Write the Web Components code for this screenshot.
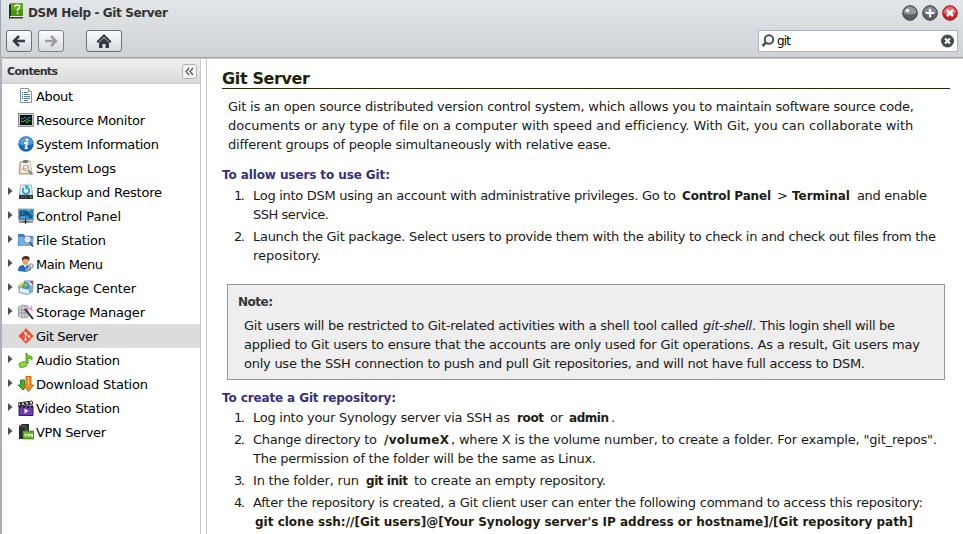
<!DOCTYPE html>
<html lang="en">
<head>
<meta charset="utf-8">
<title>DSM Help - Git Server</title>
<style>
html,body{margin:0;width:963px;height:534px;overflow:hidden;background:#fff}
</style>
</head>
<body>
<help-window></help-window>
<script>
// A run of text set to a fixed measure by adjusting its tracking.
class TextRun extends HTMLElement{
  connectedCallback(){
    if(this.shadowRoot)return;
    this.attachShadow({mode:'open'}).innerHTML='<style>:host{display:inline-block;white-space:pre}span{display:inline-block}</style><span><slot></slot></span>';
    const w=+this.getAttribute('w'),n=this.textContent.length,s=this.shadowRoot.querySelector('span');
    const nat=s.getBoundingClientRect().width;
    if(w&&n>1){s.style.letterSpacing=((w-nat)/(n-1))+'px';this.style.width=w+'px'}
    if(this.hasAttribute('g'))this.style.marginLeft=this.getAttribute('g')+'px';
  }
}
customElements.define('text-run',TextRun);

const ICONS={
about:'<path d="M2.500 .5h8l3 3v11h-11z" fill="#fcfcfc" stroke="#8e9297"/><path d="M10.500 .5v3h3" fill="#ddd" stroke="#999"/><path d="M6 4.500h4M6 6.500h6M6 8.500h6M6 10.500h6M6 12.500h4" stroke="#5b7fb5"/><path d="M4 4.500h1M4 6.500h1M4 8.500h1M4 10.500h1" stroke="#2f5c9c"/>',
monitor:'<rect x=".5" y="1.500" width="15" height="13" fill="#c5c7c9" stroke="#909294"/><rect x="2" y="3" width="12" height="10" fill="#06131b"/><path d="M3 6l2 1 2-2 2 3 2-3 2 1" fill="none" stroke="#3085c7"/><path d="M3 9l2 1 2-2 2 3 2-3 2 1" fill="none" stroke="#42b63b"/>',
info:'<circle cx="8" cy="8" r="7.700" fill="#1769bb"/><path d="M1 8a7 7 0 0114 0q-7 3-14 0z" fill="#4e9ee0"/><circle cx="9" cy="4" r="1.400" fill="#fff"/><path d="M6 7h3l-1.300 5h2" fill="none" stroke="#fff" stroke-width="1.800"/>',
logs:'<path d="M2 2l10-1 2 13H1z" fill="#dfc48c" stroke="#b59b71"/><path d="M3 3l9-1 1.500 10L2.500 13z" fill="#f6f6f4"/><rect x="5" y="0" width="5" height="3" rx="1" fill="#77797b"/><circle cx="8" cy="8" r="3" fill="#e3eaf0" stroke="#aaa"/><path d="M10.500 10.500l4 4" stroke="#888" stroke-width="2"/><path d="M3 10l2-2 3 1 3-3" stroke="#d99a90" fill="none"/>',
backup:'<path d="M2.500 1h11l1 10h-13z" fill="#eceff1" stroke="#a9adb0"/><rect x="1" y="11" width="14" height="4" fill="#2f3337"/><path d="M3 13h1M5 13h1M7 13h1" stroke="#999"/><path d="M12 13h2" stroke="#5ad83e"/><path d="M6 4a3.300 3.300 0 104 0" fill="none" stroke="#1a9bd7" stroke-width="1.700"/><path d="M7 1l4 1.500L8 6z" fill="#1a9bd7"/>',
control:'<rect x=".5" y="1" width="15" height="11" fill="#2585bc" stroke="#9aa3a9"/><path d="M3 3v5h3V3M8 3v4h5M8 5h3M11 9h3" fill="none" stroke="#0c2c4a"/><path d="M3 9h4M9 2h4" stroke="#6ad3f1"/><path d="M1 12.500h14V15H1z" fill="#8f9598"/><path d="M7.500 11v5M5.500 13.500h4" stroke="#191d20"/><path d="M12 13.500h2" stroke="#64c53e"/>',
file:'<path d="M0 2h6l1 2h8v10H0z" fill="#3e82c3"/><path d="M0 5h16l-1 9H1z" fill="#76aee1"/><circle cx="9.500" cy="7.500" r="3.700" fill="#d6e9f5" stroke="#758b9d"/><path d="M12 10.500l3 4" stroke="#4b5968" stroke-width="2"/>',
user:'<path d="M0 15q0-6 5-6h4q4 0 4 5l-5 2z" fill="#216eb8"/><path d="M5 8h4l-1.500 4z" fill="#fff"/><ellipse cx="7.500" cy="5" rx="3" ry="4" fill="#e5a169"/><path d="M4 5Q3 0 8 0t3 5L9.500 3H6z" fill="#54301a"/><path d="M8 15l5-5" stroke="#9aa8b3" stroke-width="2.500"/><circle cx="13" cy="10" r="2" fill="none" stroke="#9daab4" stroke-width="1.500"/>',
package:'<path d="M6 1h9v8H8z" fill="#e7edf4" stroke="#6995c7"/><path d="M11 1h4v4z" fill="#dc4444"/><path d="M0 6l4-3 11 3v6l-5 3-9-2z" fill="#79acd7"/><path d="M2 8l9 2v4l-9-2z" fill="#e7f3fb"/><circle cx="8" cy="5.500" r="3.500" fill="#3d8ec7"/><path d="M6 4l3-1 1 2-3 3z" fill="#8cc244"/><path d="M1 4l4-2 1 2-4 3z" fill="#edd24c"/>',
storage:'<path d="M.5 3L5 1l5 1v11l-5 1-4.500-2z" fill="#d7d7da" stroke="#999"/><path d="M1 6h9M1 9h9M4 2v12M7 2v12" stroke="#96979b"/><path d="M7 5l8 10" stroke="#2c2432" stroke-width="2"/><path d="M8 4l5 1M13 2l1 5" stroke="#e58cd6" stroke-width="1.500"/>',
git:'<path d="M8 .3L15.700 8 8 15.700.3 8z" fill="#f05033"/><path d="M5.500 3l2 2.300v6M8 5.500L11 8.500" stroke="#fff" fill="none" stroke-width="1"/><circle cx="7.700" cy="5.500" r="1.200" fill="#fff"/><circle cx="7.500" cy="11.500" r="1.200" fill="#fff"/><circle cx="11" cy="8.500" r="1.200" fill="#fff"/>',
audio:'<path d="M8 1q2 3 6 4v3q-2-2-4-2v6" fill="#82cf32" stroke="#4da019"/><path d="M8.500 1v11" stroke="#61b51e" stroke-width="2"/><ellipse cx="5" cy="12.500" rx="4" ry="2.600" fill="#91d842" stroke="#5aa824" transform="rotate(-18 5 12.500)"/>',
download:'<path d="M2.500 4h4v5h3L5 14 0 9h2.500z" fill="#42ad35" stroke="#278423"/><path d="M8 .5h5V9h2.700L10.500 15.500 5.500 9H8z" fill="#f58d20" stroke="#d45f14"/><path d="M9 1.500h1.500V10" stroke="#ffc469" fill="none"/>',
video:'<path d="M0 3l14-2 1 3-15 2z" fill="#eee" stroke="#333"/><path d="M2 3l2 2M6 2.500l2 2M10 2l2 2" stroke="#222" stroke-width="2"/><path d="M1 6h14v9.500H1z" fill="#6e3ab4" stroke="#33204d"/><path d="M1 7h14" stroke="#222" stroke-width="2" stroke-dasharray="2 2"/><path d="M6.500 8.500l4 2.500-4 2.500z" fill="#fff"/>',
vpn:'<path d="M1 2l3-2h7v12l-2 3H1z" fill="#292d30"/><path d="M1 2h7v13" fill="none" stroke="#666b70"/><rect x="5" y="7" width="11" height="8" fill="#63ad26" stroke="#438516" stroke-width=".7"/><path d="M6.500 9.500l1 3 1-3M10 13v-3h1.500v1.500H10M13 13v-3l1.500 3v-3" fill="none" stroke="#fff" stroke-width=".8"/>'
};

class NavItem extends HTMLElement{
  connectedCallback(){
    if(this.shadowRoot)return;
    const a=n=>this.getAttribute(n);
    this.attachShadow({mode:'open'}).innerHTML=`<style>
    :host{display:flex;align-items:center;height:24px;font:13px/22px "DejaVu Sans",sans-serif;color:#000}
    :host([selected]){background:#dcdcdc}
    text-run{padding-top:2px}
    .a{width:16px;height:24px;display:block}.i{width:16px;height:16px;margin-right:2px;display:block}</style>
    <svg class="a" viewBox="0 0 16 24">${this.hasAttribute('open')?'<path d="M6 7v8l4.500-4z" fill="#495159"/>':''}</svg>
    <svg class="i" viewBox="0 0 16 16">${ICONS[a('icon')]}</svg><text-run w="${a('w')}">${a('label')}</text-run>`;
  }
}
customElements.define('nav-item',NavItem);

class ToolButton extends HTMLElement{
  connectedCallback(){
    if(this.shadowRoot)return;
    this.attachShadow({mode:'open'}).innerHTML=`<style>
    :host{display:flex;align-items:center;justify-content:center;box-sizing:border-box;width:26px;height:22px;border:1px solid #686f75;border-radius:3px;background:linear-gradient(#fafbfb,#e9ebed 50%,#d6dadd)}
    :host([wide]){width:36px}:host([disabled]){border-color:#7c8389}</style><slot></slot>`;
  }
}
customElements.define('tool-button',ToolButton);

class TitleBar extends HTMLElement{
  connectedCallback(){
    if(this.shadowRoot)return;
    this.attachShadow({mode:'open'}).innerHTML=`<style>
    :host{display:block;box-sizing:border-box;height:59px;background:linear-gradient(#e2e6e9,#ced2d5);border-bottom:1px solid #c7c9ca;box-shadow:inset 0 -1px #a3a3a3,inset 1px 0 #9da6b0}
    svg{display:block}.t{display:flex;height:30px;padding-left:9px;padding-right:5px}
    .book{margin:3px 4px 0 0}text-run{font:bold 12px/27px "DejaVu Sans",sans-serif;color:#333}
    .c{display:flex;gap:4px;margin-left:auto;margin-top:5px}
    .b{display:flex;padding:0 5px 0 6px}.b tool-button+tool-button{margin-left:6px}.b tool-button[wide]{margin-left:22px}
    .s{margin-left:auto;box-sizing:border-box;width:200px;height:22px;border:1px solid #acb1c9;background:#fff;display:flex;align-items:center;padding:0 3px 0 2px}
    .s text-run{font:12px/18px "DejaVu Sans",sans-serif;color:#000;margin-left:2px}.s svg:last-child{margin-left:auto}</style>
    <div class="t"><svg class="book" width="15" height="17" viewBox="0 0 15 17"><path d="M0 2l2-2v14l-2 2z" fill="#153a09"/><path d="M2 0h12v13H2z" fill="#62ad17"/><path d="M2 7h12v6H2z" fill="#479308"/><path d="M1 13h13v1H1z" fill="#eee"/><path d="M0 14h14v1.500H0z" fill="#254615"/><path d="M6 4q0-2 2.300-2t2.300 2q0 1.500-2.100 2.500v1.500M8.500 9.300v1.700" fill="none" stroke="#fff" stroke-width="1.500"/></svg>
    <text-run w="140">DSM Help - Git Server</text-run>
    <div class="c">
    <svg width="16" height="16"><circle cx="8" cy="8" r="7.300" fill="#5c6063" stroke="#3d4143"/><path d="M1.500 8a6.500 6.500 0 0113 0q-6 3-13 0z" fill="#94989b"/><circle cx="5.500" cy="5.500" r="1.700" fill="#fff"/></svg>
    <svg width="16" height="16"><circle cx="8" cy="8" r="7.300" fill="#5c6265" stroke="#3d4346"/><path d="M1.500 8a6.500 6.500 0 0113 0q-6 3-13 0z" fill="#85898c"/><path d="M8 3.800v8.400M3.800 8h8.400" stroke="#fff" stroke-width="2.200"/></svg>
    <svg width="16" height="16"><circle cx="8" cy="8" r="7.300" fill="#cb2426" stroke="#a41b1e"/><path d="M1.500 8a6.500 6.500 0 0113 0q-6 3-13 0z" fill="#de6d6d"/><path d="M5 5l6 6M11 5l-6 6" stroke="#fff" stroke-width="2.500"/></svg>
    </div></div>
    <div class="b">
    <tool-button><svg width="16" height="14"><path d="M8 2L3 7l5 5M3 7h11" fill="none" stroke="#363c42" stroke-width="2.500"/></svg></tool-button>
    <tool-button disabled><svg width="16" height="14"><path d="M8 2l5 5-5 5M13 7H2" fill="none" stroke="#9a9ea2" stroke-width="2.500"/></svg></tool-button>
    <tool-button wide><svg width="18" height="16"><path d="M9 1L1.500 8.500 3 10l6-6 6 6 1.500-1.500z" fill="#343a40"/><path d="M4 9.500l5-4.500 5 4.500V15h-3.500v-4h-3v4H4z" fill="#343a40"/></svg></tool-button>
    <div class="s"><svg width="14" height="16"><circle cx="8" cy="6.500" r="4.200" fill="#fff" stroke="#484e53" stroke-width="2"/><path d="M5 9.500L1.500 13" stroke="#484e53" stroke-width="2.500"/></svg><text-run w="14">git</text-run><svg width="13" height="14"><circle cx="6.500" cy="7" r="6.500" fill="#454d53"/><path d="M4 4.500l5 5M9 4.500l-5 5" stroke="#fff" stroke-width="2"/></svg></div>
    </div>`;
  }
}
customElements.define('title-bar',TitleBar);

class HelpContents extends HTMLElement{
  connectedCallback(){
    if(this.shadowRoot)return;
    const rows=[['about','About',37],['monitor','Resource Monitor',109],['info','System Information',123],['logs','System Logs',80],['backup','Backup and Restore',126,1],['control','Control Panel',85,1],['file','File Station',70,1],['user','Main Menu',67,1],['package','Package Center',100,1],['storage','Storage Manager',109,1],['git','Git Server',62],['audio','Audio Station',84,1],['download','Download Station',112,1],['video','Video Station',84,1],['vpn','VPN Server',70,1]];
    this.attachShadow({mode:'open'}).innerHTML=`<style>
    :host{display:block;box-sizing:border-box;width:201px;border-left:2px solid #abb1b8;border-right:1px solid #ccc;background:#fff}
    header{display:flex;align-items:center;box-sizing:border-box;height:25px;padding:0 3px 0 5px;border-bottom:1px solid #ccc;background:linear-gradient(#f0f0f0,#dadada);font:bold 11px/22px "DejaVu Sans",sans-serif;color:#333}
    header text-run{padding-top:2px}
    svg{display:block;margin-left:auto}</style>
    <header><text-run w="51">Contents</text-run><svg width="15" height="15"><rect x=".5" y=".5" width="14" height="14" rx="2.500" fill="#f5f5f5" stroke="#b3b3b3"/><path d="M7 4L4 7.500 7 11M11 4L8 7.500l3 3.500" fill="none" stroke="#555" stroke-width="1.200"/></svg></header>
    <nav>${rows.map(r=>`<nav-item icon="${r[0]}" label="${r[1]}" w="${r[2]}" ${r[3]?'open':''} ${r[0]=='git'?'selected':''}></nav-item>`).join('')}</nav>`;
  }
}
customElements.define('help-contents',HelpContents);

class HelpArticle extends HTMLElement{
  connectedCallback(){
    if(this.shadowRoot)return;
    const item=(n,...lines)=>`<li><text-run w="11">${n}.</text-run><article>${lines.map(l=>`<div>${l}</div>`).join('')}</article></li>`;
    this.attachShadow({mode:'open'}).innerHTML=`<style>
    :host{display:block;box-sizing:border-box;flex:1;min-width:0;margin-left:5px;border-left:1px solid #ccc;padding:7px 13px 0 15px;background:#fff;font:13px/19px "DejaVu Sans",sans-serif;color:#1a1a1a}
    h1,h2,h3,ol{margin:0;padding:0}
    div,h1,h2,h3{display:flex}
    h1{box-sizing:border-box;height:23px;border-bottom:1px solid #2a2a00;font-size:16px;line-height:25px;color:#222200}
    h2{font-size:12px;height:19px;line-height:21px;color:#363080}
    section{padding:8px 0 11px 6px}
    ol{list-style:none;padding:2px 0 0 12px}.second{padding-top:1px}
    li{display:flex;margin-bottom:3px}li>text-run{margin-right:8px}
    b{color:#221c10;font-size:12px;display:flex;height:19px;line-height:21px}
    aside{box-sizing:border-box;width:718px;height:96px;margin:19px 0 8px 5px;border:1px solid #999;background:#eee;padding:7px 0 0 10px}
    aside h3{font-size:12px;height:19px;line-height:21px;color:#333}aside section{padding:5px 0 0 6px}</style>
    <h1><text-run w="88">Git Server</text-run></h1>
    <section>
    <div><text-run w="686">Git is an open source distributed version control system, which allows you to maintain software source code,</text-run></div>
    <div><text-run w="685">documents or any type of file on a computer with speed and efficiency. With Git, you can collaborate with</text-run></div>
    <div><text-run w="383">different groups of people simultaneously with relative ease.</text-run></div></section>
    <h2><text-run w="168">To allow users to use Git:</text-run></h2>
    <ol>${
      item(1,'<text-run w="423">Log into DSM using an account with administrative privileges. Go to</text-run><b><text-run g="6" w="89">Control Panel</text-run></b><text-run g="6">&gt;</text-run><b><text-run g="4" w="58">Terminal</text-run></b><text-run g="7" w="70">and enable</text-run>','<text-run w="76">SSH service.</text-run>')+
      item(2,'<text-run w="683">Launch the Git package. Select users to provide them with the ability to check in and check out files from the</text-run>','<text-run w="68">repository.</text-run>')
    }</ol>
    <aside><h3><text-run w="35">Note:</text-run></h3>
    <section><div><text-run w="454">Git users will be restricted to Git-related activities with a shell tool called</text-run><i><text-run w="49" g="5">git-shell</text-run></i><text-run w="143">. This login shell will be</text-run></div>
    <div><text-run w="676">applied to Git users to ensure that the accounts are only used for Git operations. As a result, Git users may</text-run></div>
    <div><text-run w="621">only use the SSH connection to push and pull Git repositories, and will not have full access to DSM.</text-run></div></section></aside>
    <h2><text-run w="174">To create a Git repository:</text-run></h2>
    <ol class="second">${
      item(1,'<text-run w="257">Log into your Synology server via SSH as</text-run><b><text-run g="7" w="27">root</text-run></b><text-run g="6" w="13">or</text-run><b><text-run g="6" w="40">admin</text-run></b><text-run g="2">.</text-run>')+
      item(2,'<text-run w="124">Change directory to</text-run><b><text-run g="7" w="65">/volumeX</text-run></b><text-run g="2" w="486">, where X is the volume number, to create a folder. For example, "git_repos".</text-run>','<text-run w="343">The permission of the folder will be the same as Linux.</text-run>')+
      item(3,'<text-run w="106">In the folder, run</text-run><b><text-run g="7" w="42">git init</text-run></b><text-run g="6" w="192">to create an empty repository.</text-run>')+
      item(4,'<text-run w="670">After the repository is created, a Git client user can enter the following command to access this repository:</text-run>',`<b><text-run g="2" w="658">git clone ssh://[Git users]@[Your Synology server's IP address or hostname]/[Git repository path]</text-run></b>`)
    }</ol>`;
  }
}
customElements.define('help-article',HelpArticle);

class HelpWindow extends HTMLElement{
  connectedCallback(){
    this.attachShadow({mode:'open'}).innerHTML=`<style>:host{display:flex;flex-direction:column;width:963px;height:534px;overflow:hidden}main{display:flex;flex:1;min-height:0}</style><title-bar></title-bar><main><help-contents></help-contents><help-article></help-article></main>`;
  }
}
customElements.define('help-window',HelpWindow);
</script>
</body>
</html>
